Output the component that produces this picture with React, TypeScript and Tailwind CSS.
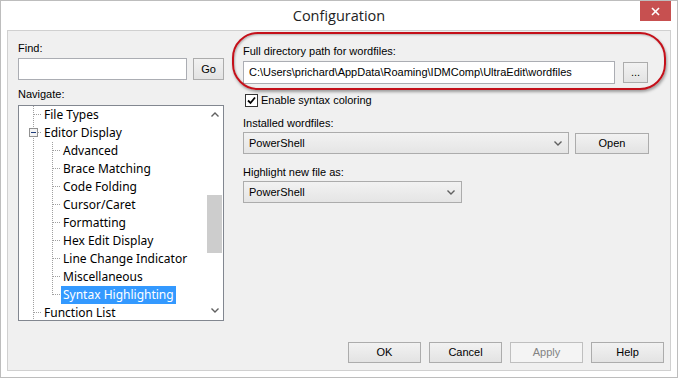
import React from "react";

const ui = "font-['Liberation_Sans',Arial,sans-serif] text-[11px] leading-[13px] text-black";

function Chevron({ dir = "down" }: { dir?: "down" | "up" }) {
  return (
    <svg width="8" height="5" viewBox="0 0 8 5" className="block">
      <polyline
        points={dir === "down" ? "0.5,0.5 4,4 7.5,0.5" : "0.5,4.5 4,1 7.5,4.5"}
        fill="none"
        stroke="#606060"
        strokeWidth="1.4"
      />
    </svg>
  );
}

function Btn({ children, w, extra = "" }: { children: React.ReactNode; w: string; extra?: string }) {
  return (
    <div
      className={`${w} h-[21px] flex items-center justify-center border border-[#acacac] bg-linear-to-b from-[#f2f2f2] to-[#e3e3e3] ${extra}`}
    >
      {children}
    </div>
  );
}

type Row = { t: string; l: number; box?: boolean; last?: boolean; sel?: boolean };

const rows: Row[] = [
  { t: "File Types", l: 0 },
  { t: "Editor Display", l: 0, box: true },
  { t: "Advanced", l: 1 },
  { t: "Brace Matching", l: 1 },
  { t: "Code Folding", l: 1 },
  { t: "Cursor/Caret", l: 1 },
  { t: "Formatting", l: 1 },
  { t: "Hex Edit Display", l: 1 },
  { t: "Line Change Indicator", l: 1 },
  { t: "Miscellaneous", l: 1 },
  { t: "Syntax Highlighting", l: 1, last: true, sel: true },
  { t: "Function List", l: 0 },
];

function Gutter({ r }: { r: Row }) {
  const w = r.l === 0 ? 23 : 42;
  const x0 = 14.5;
  const x1 = 33.5;
  const dot = { stroke: "#a0a0a0", strokeWidth: 1, strokeDasharray: "1 1" };
  return (
    <svg width={w} height="18" viewBox={`0 0 ${w} 18`} className="block shrink-0">
      <line x1={x0} y1={0} x2={x0} y2={18} {...dot} />
      {r.l === 0 && !r.box && <line x1={15} y1={8.5} x2={24} y2={8.5} {...dot} />}
      {r.l === 1 && (
        <>
          <line x1={x1} y1={0} x2={x1} y2={r.last ? 9 : 18} {...dot} />
          <line x1={34} y1={8.5} x2={43} y2={8.5} {...dot} />
        </>
      )}
      {r.box && (
        <>
          <line x1={19} y1={8.5} x2={24} y2={8.5} {...dot} />
          <rect x={10.5} y={4.5} width={8} height={8} fill="#f4f4f4" stroke="#919191" strokeWidth={1} />
          <line x1={12} y1={8.5} x2={17} y2={8.5} stroke="#1e3d7b" strokeWidth={1} />
        </>
      )}
    </svg>
  );
}

export default function App() {
  return (
    <div className={`w-[678px] h-[378px] bg-white border border-[#bdbdbd] flex flex-col overflow-hidden ${ui}`}>
      {/* title bar */}
      <div className="h-[29px] relative flex items-center justify-center">
        <span className="font-['Open_Sans','Noto_Sans',sans-serif] text-[14.5px] leading-[20px] text-[#222] mt-[1px]">
          Configuration
        </span>
        <div className="absolute right-[6px] top-0 w-[31px] h-[20px] bg-[#c75050] flex items-center justify-center">
          <svg width="9" height="9" viewBox="0 0 9 9">
            <line x1="1" y1="1" x2="8" y2="8" stroke="white" strokeWidth="1.6" />
            <line x1="8" y1="1" x2="1" y2="8" stroke="white" strokeWidth="1.6" />
          </svg>
        </div>
      </div>

      {/* client area */}
      <div className="ml-[6px] w-[664px] h-[341px] border border-[#d0d0d0] bg-[#f0f0f0] flex flex-col relative">
        {/* red annotation ellipse */}
        <div className="absolute left-[224px] top-[1px] w-[434px] h-[58px] rounded-[26px] border-[2px] border-[#c4101a] shadow-[1px_2px_3px_rgba(0,0,0,0.35),inset_1px_1px_2px_rgba(0,0,0,0.25)] pointer-events-none" />

        <div className="flex">
          {/* left column */}
          <div className="ml-[10px] w-[206px] pt-[11px] flex flex-col">
            <div>Find:</div>
            <div className="mt-[3px] flex">
              <div className="w-[169px] h-[22px] bg-white border border-[#abadb3]" />
              <Btn w="w-[31px] ml-[6px]" extra="h-[22px]">Go</Btn>
            </div>
            <div className="mt-[8px]">Navigate:</div>
            <div className="mt-[4px] h-[216px] border border-[#828790] bg-white flex overflow-hidden">
              <div className="flex-1 flex flex-col font-['Noto_Sans','Open_Sans',sans-serif] text-[12px] leading-[18px]">
                {rows.map((r) => (
                  <div key={r.t} className="h-[18px] shrink-0 flex items-center">
                    <Gutter r={r} />
                    <span className={`px-[2px] whitespace-nowrap ${r.sel ? "bg-[#3399ff] text-white" : "text-black"}`}>
                      {r.t}
                    </span>
                  </div>
                ))}
              </div>
              <div className="w-[17px] shrink-0 flex flex-col bg-white">
                <div className="h-[17px] flex items-center justify-center">
                  <Chevron dir="up" />
                </div>
                <div className="h-[72px]" />
                <div className="h-[58px] mx-[1px] bg-[#cdcdcd]" />
                <div className="flex-1" />
                <div className="h-[17px] flex items-center justify-center pb-[3px]">
                  <Chevron />
                </div>
              </div>
            </div>
          </div>

          {/* right column */}
          <div className="ml-[19px] pt-[14px] flex flex-col">
            <div>Full directory path for wordfiles:</div>
            <div className="mt-[3px] flex items-center">
              <div className="w-[372px] h-[23px] bg-white border border-[#abadb3] flex items-center pl-[5px] whitespace-nowrap">
                C:\Users\prichard\AppData\Roaming\IDMComp\UltraEdit\wordfiles
              </div>
              <Btn w="w-[25px] ml-[8px]" extra="leading-[10px] items-end pb-[5px]">...</Btn>
            </div>
            <div className="mt-[10px] h-[13px] flex items-center ml-[2px]">
              <div className="w-[13px] h-[13px] border border-[#333] bg-white flex items-center justify-center">
                <svg width="9" height="9" viewBox="0 0 9 9">
                  <polyline points="1,4.5 3.5,7 8,1.5" fill="none" stroke="#000" strokeWidth="1.8" />
                </svg>
              </div>
              <span className="ml-[3px]">Enable syntax coloring</span>
            </div>
            <div className="mt-[10px]">Installed wordfiles:</div>
            <div className="mt-[2px] flex items-center">
              <div className="w-[326px] h-[22px] border border-[#acacac] bg-linear-to-b from-[#f2f2f2] to-[#e5e5e5] flex items-center justify-between pl-[5px] pr-[6px]">
                <span>PowerShell</span>
                <Chevron />
              </div>
              <Btn w="w-[74px] ml-[6px]">Open</Btn>
            </div>
            <div className="mt-[12px]">Highlight new file as:</div>
            <div className="mt-[2px] w-[219px] h-[22px] border border-[#acacac] bg-linear-to-b from-[#f2f2f2] to-[#e5e5e5] flex items-center justify-between pl-[5px] pr-[6px]">
              <span>PowerShell</span>
              <Chevron />
            </div>
          </div>
        </div>

        <div className="flex-1" />

        {/* bottom buttons */}
        <div className="flex justify-end gap-[8px] pr-[6px] pb-[7px]">
          <Btn w="w-[73px]" extra="border-[#3c7fb1]">OK</Btn>
          <Btn w="w-[73px]">Cancel</Btn>
          <div className="w-[73px] h-[21px] flex items-center justify-center border border-[#bfbfbf] bg-[#f4f4f4] text-[#838383]">
            Apply
          </div>
          <Btn w="w-[73px]">Help</Btn>
        </div>
      </div>
    </div>
  );
}
